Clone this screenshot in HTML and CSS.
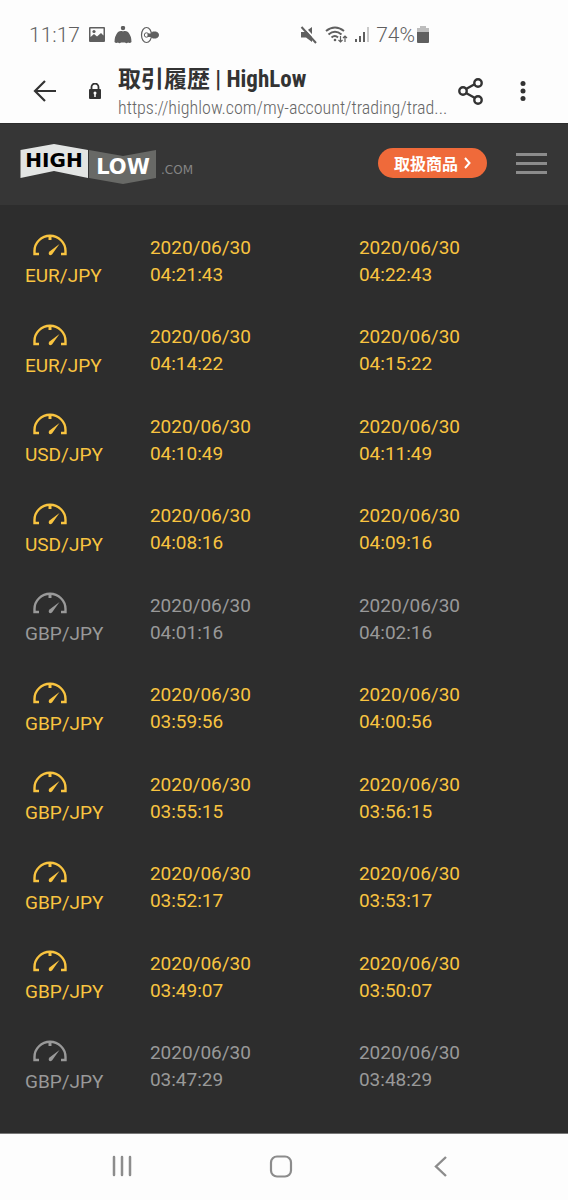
FILE: index.html
```html
<!DOCTYPE html>
<html lang="ja">
<head>
    <meta charset="utf-8">
    <meta name="viewport" content="width=device-width, initial-scale=1">
    <title>取引履歴 | HighLow</title>
    <link rel="stylesheet" href="styles.css">
</head>
<body>

<svg class="sprite" aria-hidden="true">
    <symbol id="gauge" viewBox="0 0 36 22">
        <path d="M7 20H2.500V17A15.500 15.200 0 0 1 33.500 17V20H29" fill="none" stroke="currentColor" stroke-width="2.400"/>
        <path d="M18 1V6" stroke="currentColor" stroke-width="3"/>
        <path d="M27.500 10L20 20.500Q18 22 17 20.500Q16 19 17.500 17.500Z" fill="currentColor"/>
    </symbol>
</svg>

<div class="status-bar">
    <div class="status-left">
        <span>11:17</span>
        <svg width="18" height="18" viewBox="0 0 18 18" aria-hidden="true">
            <path fill-rule="evenodd" d="M2 1H16Q17 1 17 2V15Q17 16 16 16H2Q1 16 1 15V2Q1 1 2 1ZM2.500 2.500V11L6 8L9 10.500L13 7L15.500 9.500V2.500Z" fill="#5f5f5f"/>
            <circle cx="6" cy="5.500" r="1.600" fill="#5f5f5f"/>
        </svg>
        <svg width="18" height="18" viewBox="0 0 18 18" aria-hidden="true">
            <circle cx="9" cy="2" r="2.200" fill="#5f5f5f"/>
            <path d="M4 6Q6 4.500 8 5L9 5.500L10 5Q12 4.500 14 6Q17.500 10 17.500 16Q16 17.500 14 16.500Q12.500 18 11 16.500H7Q5.500 18 4 16.500Q2 17.500 0.500 16Q0.500 10 4 6Z" fill="#5f5f5f"/>
        </svg>
        <svg width="20" height="18" viewBox="0 0 20 18" aria-hidden="true">
            <ellipse cx="6.500" cy="9" rx="5" ry="7.500" fill="none" stroke="#5f5f5f" stroke-width="1.200"/>
            <path d="M8 8H11L12.500 6H16Q18.500 6.500 18.500 9Q18.500 11.500 16 12H12.500L11 10.500H8Z" fill="#5f5f5f" stroke="#5f5f5f" stroke-linejoin="round"/>
            <circle cx="6.500" cy="9" r="2.200" fill="none" stroke="#5f5f5f"/>
        </svg>
    </div>
    <div class="status-right">
        <svg width="18" height="18" viewBox="0 0 18 18" aria-hidden="true">
            <path d="M1 6H5L12 1V16L6 11.500H1Z" fill="#5f5f5f"/>
            <path d="M3 0L18 16" stroke="#fdfdfd" stroke-width="2"/>
            <path d="M1.500 1L16 17" stroke="#5f5f5f" stroke-width="2"/>
        </svg>
        <svg width="24" height="18" viewBox="0 0 24 18" fill="none" stroke="#5f5f5f" stroke-width="2" aria-hidden="true">
            <path d="M2 5Q11 -2 20 5M4.500 8.500Q11 3 17.500 8.500M7.500 11.500Q11 8.500 14 11.500"/>
            <circle cx="11" cy="14" r="1.300" fill="#5f5f5f" stroke="none"/>
            <path d="M16.500 10V16M14.500 14L16.500 16L18.500 14M21 16V10M19 12L21 10L23 12" stroke-width="1.200"/>
        </svg>
        <svg width="16" height="18" viewBox="0 0 16 18" aria-hidden="true">
            <path d="M2 13V16M6 10V16M10 6V16" stroke="#5f5f5f" stroke-width="2"/>
            <path d="M14 1V16" stroke="#c9c9c9" stroke-width="2"/>
        </svg>
        <span>74%</span>
        <svg class="battery" width="12" height="18" viewBox="0 0 12 18" aria-hidden="true">
            <path d="M3 0H9V2H12V6H0V2H3Z" fill="#bdbdbd"/>
            <path d="M0 6H12V16Q12 17 11 17H1Q0 17 0 16Z" fill="#5f5f5f"/>
        </svg>
    </div>
</div>

<div class="browser-bar">
    <button class="icon-btn back" aria-label="戻る">
        <svg width="24" height="24" viewBox="0 0 24 24" fill="none" stroke="#333" stroke-width="2.200">
            <path d="M12 1L2 11L12 21M2 11H23"/>
        </svg>
    </button>
    <svg class="lock" width="14" height="18" viewBox="0 0 14 18" aria-hidden="true">
        <path d="M3.500 7V4A3.500 3.500 0 0 1 10.500 4V7" fill="none" stroke="#333" stroke-width="1.800"/>
        <rect x="1" y="6" width="12" height="10" rx="1" fill="#333"/>
        <path d="M7 10V14" stroke="#fff" stroke-width="1.500"/>
        <circle cx="7" cy="10" r="1.500" fill="#fff"/>
    </svg>
    <div class="page-info">
        <div class="page-title">取引履歴 | HighLow</div>
        <div class="page-url">https://highlow.com/my-account/trading/trad...</div>
    </div>
    <button class="icon-btn share" aria-label="共有">
        <svg width="26" height="28" viewBox="0 0 26 28" fill="none" stroke="#333" stroke-width="2.400">
            <circle cx="5" cy="13" r="3.700"/>
            <circle cx="20" cy="4" r="3.700" transform="translate(0 1)"/>
            <circle cx="20" cy="22" r="3.700"/>
            <path d="M8 11L17 6M8 15L17 20"/>
        </svg>
    </button>
    <button class="icon-btn more" aria-label="メニュー">
        <svg width="6" height="22" viewBox="0 0 6 22" fill="#333">
            <circle cx="3" cy="2.500" r="2.500"/>
            <circle cx="3" cy="10" r="2.500"/>
            <circle cx="3" cy="17.500" r="2.500"/>
        </svg>
    </button>
</div>

<header class="site-header">
    <a href="#" class="logo" aria-label="HighLow.com">
        <svg width="180" height="44" viewBox="0 0 180 44">
            <path d="M0.500 7L34 1L68 7V35L34 28L0.500 35Z" fill="#e3e5e4"/>
            <path d="M69 7L103 13L136 7V35L103 41L69 35Z" fill="#686966"/>
            <text class="logo-text high" x="34" y="24" fill="#000">HIGH</text>
            <text class="logo-text low" x="103" y="31" fill="#fff">LOW</text>
            <text class="logo-com" x="141" y="31" fill="#858585">.COM</text>
        </svg>
    </a>
    <button class="products-btn">取扱商品
        <svg width="7" height="12" viewBox="0 0 7 12" fill="none" stroke="#fff" stroke-width="2" aria-hidden="true">
            <path d="M1 1L5.500 6L1 11"/>
        </svg>
    </button>
    <button class="burger-menu" aria-label="サイトメニュー">
        <span class="line"></span>
        <span class="line"></span>
        <span class="line"></span>
    </button>
</header>

<main class="main-content">
    <table class="history" aria-label="取引履歴">
        <tbody>
            <tr>
                <td><svg class="gauge"><use href="#gauge"/></svg>EUR/JPY</td>
                <td>2020/06/30<br>04:21:43</td>
                <td>2020/06/30<br>04:22:43</td>
            </tr>
            <tr>
                <td><svg class="gauge"><use href="#gauge"/></svg>EUR/JPY</td>
                <td>2020/06/30<br>04:14:22</td>
                <td>2020/06/30<br>04:15:22</td>
            </tr>
            <tr>
                <td><svg class="gauge"><use href="#gauge"/></svg>USD/JPY</td>
                <td>2020/06/30<br>04:10:49</td>
                <td>2020/06/30<br>04:11:49</td>
            </tr>
            <tr>
                <td><svg class="gauge"><use href="#gauge"/></svg>USD/JPY</td>
                <td>2020/06/30<br>04:08:16</td>
                <td>2020/06/30<br>04:09:16</td>
            </tr>
            <tr class="lost">
                <td><svg class="gauge"><use href="#gauge"/></svg>GBP/JPY</td>
                <td>2020/06/30<br>04:01:16</td>
                <td>2020/06/30<br>04:02:16</td>
            </tr>
            <tr>
                <td><svg class="gauge"><use href="#gauge"/></svg>GBP/JPY</td>
                <td>2020/06/30<br>03:59:56</td>
                <td>2020/06/30<br>04:00:56</td>
            </tr>
            <tr>
                <td><svg class="gauge"><use href="#gauge"/></svg>GBP/JPY</td>
                <td>2020/06/30<br>03:55:15</td>
                <td>2020/06/30<br>03:56:15</td>
            </tr>
            <tr>
                <td><svg class="gauge"><use href="#gauge"/></svg>GBP/JPY</td>
                <td>2020/06/30<br>03:52:17</td>
                <td>2020/06/30<br>03:53:17</td>
            </tr>
            <tr>
                <td><svg class="gauge"><use href="#gauge"/></svg>GBP/JPY</td>
                <td>2020/06/30<br>03:49:07</td>
                <td>2020/06/30<br>03:50:07</td>
            </tr>
            <tr class="lost">
                <td><svg class="gauge"><use href="#gauge"/></svg>GBP/JPY</td>
                <td>2020/06/30<br>03:47:29</td>
                <td>2020/06/30<br>03:48:29</td>
            </tr>
        </tbody>
    </table>
</main>

<nav class="system-nav">
    <button class="icon-btn" aria-label="履歴">
        <svg width="22" height="24" viewBox="0 0 22 24" stroke="#8c8c8c" stroke-width="2.500" stroke-linecap="round">
            <path d="M3 2V20M11 2V20M19 2V20"/>
        </svg>
    </button>
    <button class="icon-btn" aria-label="ホーム">
        <svg width="24" height="24" viewBox="0 0 24 24" fill="none" stroke="#8c8c8c" stroke-width="2.200">
            <rect x="2" y="1.500" width="20" height="20" rx="6"/>
        </svg>
    </button>
    <button class="icon-btn" aria-label="戻る">
        <svg width="22" height="24" viewBox="0 0 22 24" fill="none" stroke="#8c8c8c" stroke-width="2.400">
            <path d="M17 2L7 11.500L17 21"/>
        </svg>
    </button>
</nav>

</body>
</html>
```
FILE: styles.css
```css
* {
    box-sizing: border-box;
}
body {
    margin: 0;
    min-height: 100vh;
    display: flex;
    flex-direction: column;
    font-family: Roboto, "Noto Sans CJK JP", sans-serif;
    background-color: #2d2d2d;
}
svg {
    display: block;
    flex-shrink: 0;
}
button {
    border: none;
    padding: 0;
    background: none;
    font-family: inherit;
    cursor: pointer;
}
.sprite {
    position: absolute;
    width: 0;
    height: 0;
}

/* Android status bar */
.status-bar {
    display: flex;
    justify-content: space-between;
    height: 60px;
    padding: 10px 139px 0 29px;
    background-color: #fdfdfd;
    color: #5f5f5f;
    font-size: 21px;
    font-weight: 300;
}
.status-left,
.status-right {
    display: flex;
    align-items: center;
}
.status-left {
    gap: 8px;
}
.status-right {
    gap: 6px;
}
.battery {
    margin-left: -4px;
}

/* Browser toolbar */
.browser-bar {
    display: flex;
    align-items: center;
    height: 63px;
    padding: 0 42px 0 33px;
    background-color: #fdfdfd;
}
.icon-btn {
    display: flex;
    align-items: center;
    justify-content: center;
}
.lock {
    margin: 0 16px 0 31px;
}
.page-info {
    flex: 1;
    min-width: 0;
    font-family: "Roboto Condensed", "Liberation Sans Narrow", Roboto, "Noto Sans CJK JP", sans-serif;
    white-space: nowrap;
}
.page-title {
    color: #333;
    font-size: 23px;
    font-weight: bold;
    line-height: 32px;
}
.page-url {
    color: #666;
    font-size: 18px;
    font-weight: 300;
    line-height: 24px;
}
.share {
    margin-right: 36px;
}

/* Site header */
.site-header {
    display: flex;
    align-items: center;
    height: 82px;
    padding: 0 21px 0 20px;
    background-color: #363636;
    border-top: 1px solid #2d2d2d;
}
.logo {
    margin-right: auto;
}
.logo-text {
    font-family: "DejaVu Sans", sans-serif;
    font-weight: bold;
    text-anchor: middle;
}
.high {
    font-size: 20px;
}
.low {
    font-size: 21px;
}
.logo-com {
    font-family: "DejaVu Sans", sans-serif;
    font-size: 12px;
}
.products-btn {
    display: flex;
    align-items: center;
    gap: 6px;
    height: 30px;
    padding: 0 16px;
    margin: 0 29px 4px 0;
    border-radius: 15px;
    background-color: #ef6a3a;
    color: #fff;
    font-size: 16px;
    font-weight: bold;
}
.burger-menu {
    display: flex;
    flex-direction: column;
    gap: 6px;
    margin-bottom: 2px;
}
.line {
    width: 31px;
    height: 3px;
    background-color: #8c8c8c;
}

/* Trade history */
.main-content {
    flex: 1;
    display: flex;
    padding: 11px 0 22px 25px;
}
.history {
    width: 100%;
    table-layout: fixed;
    border-collapse: collapse;
    color: #f9c440;
    font-size: 19px;
    line-height: 27px;
}
.history td {
    padding: 0;
}
.history td:first-child {
    width: 23%;
}
.history .lost {
    color: #999;
}
.gauge {
    width: 36px;
    height: 22px;
    margin: 2px 0 6px 7px;
}

/* Android navigation */
.system-nav {
    display: flex;
    justify-content: space-between;
    height: 67px;
    padding: 0 117px 0 111px;
    background-color: #fdfdfd;
    border-top: 1px solid #777;
}
```
